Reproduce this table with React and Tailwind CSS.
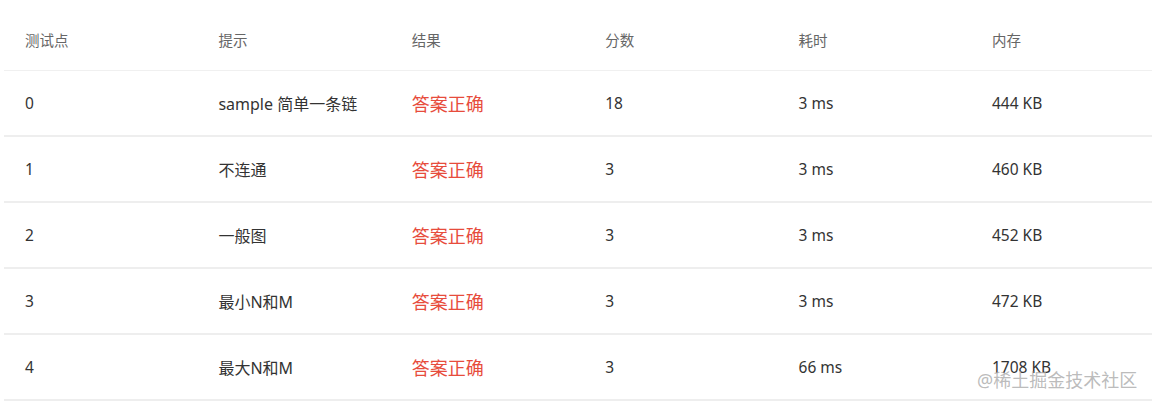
import React from "react";

const rows = [
  ["0", "sample 简单一条链", "18", "3 ms", "444 KB"],
  ["1", "不连通", "3", "3 ms", "460 KB"],
  ["2", "一般图", "3", "3 ms", "452 KB"],
  ["3", "最小N和M", "3", "3 ms", "472 KB"],
  ["4", "最大N和M", "3", "66 ms", "1708 KB"],
];

const headers = ["测试点", "提示", "结果", "分数", "耗时", "内存"];

export default function App() {
  return (
    <div
      className="relative w-[1152px] h-[403px] overflow-hidden bg-white"
      style={{ fontFamily: '"Noto Sans", "Noto Sans CJK SC", sans-serif' }}
    >
      <div className="ml-[4px] w-[1160px]">
        <div className="grid grid-cols-[repeat(6,193.4px)] h-[71px] pt-[11px] items-center border-b border-[#f0f0f0] text-[14.5px] text-[#666]">
          {headers.map((h) => (
            <div key={h} className="pl-[21px]">{h}</div>
          ))}
        </div>
        {rows.map((r) => (
          <div
            key={r[0]}
            className="grid grid-cols-[repeat(6,193.4px)] h-[66px] pt-[2px] items-center border-b-2 border-[#eeeeee] text-[15.5px] text-[#333]"
          >
            <div className="pl-[21px]">{r[0]}</div>
            <div className="pl-[21px] text-[16px]">{r[1]}</div>
            <div className="pl-[21px] text-[18px] text-[#e74c3c]">答案正确</div>
            <div className="pl-[21px]">{r[2]}</div>
            <div className="pl-[21px]">{r[3]}</div>
            <div className="pl-[21px]">{r[4]}</div>
          </div>
        ))}
      </div>
      <div className="absolute left-[977px] top-[367px] text-[18px] text-[#aaa]/80 whitespace-nowrap">
        @稀土掘金技术社区
      </div>
    </div>
  );
}
